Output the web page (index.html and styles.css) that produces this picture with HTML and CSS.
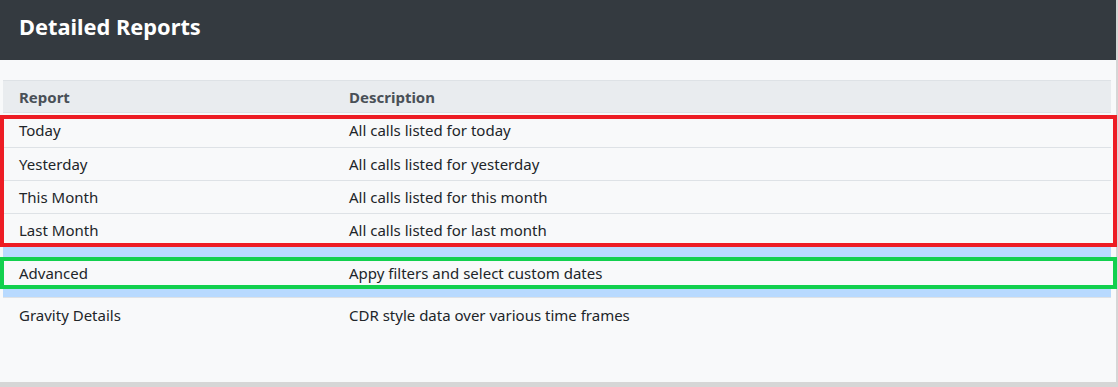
FILE: index.html
```html
<!DOCTYPE html>
<html lang="en">
<head>
<meta charset="utf-8">
<title>Detailed Reports</title>
<link rel="stylesheet" href="styles.css">
</head>
<body>
<div class="panel">
  <header class="panel-head">
    <h1 class="title">Detailed Reports</h1>
  </header>
  <div class="panel-body">
    <div class="reports">
      <div class="row row-head">
        <div class="cell c1">Report</div>
        <div class="cell c2">Description</div>
      </div>
      <div class="row"><div class="cell c1">Today</div><div class="cell c2">All calls listed for today</div></div>
      <div class="row"><div class="cell c1">Yesterday</div><div class="cell c2">All calls listed for yesterday</div></div>
      <div class="row"><div class="cell c1">This Month</div><div class="cell c2">All calls listed for this month</div></div>
      <div class="row"><div class="cell c1">Last Month</div><div class="cell c2">All calls listed for last month</div></div>
      <div class="group-primary">
        <div class="row row-inner"><div class="cell c1">Advanced</div><div class="cell c2">Appy filters and select custom dates</div></div>
      </div>
      <div class="row row-last"><div class="cell c1">Gravity Details</div><div class="cell c2">CDR style data over various time frames</div></div>
    </div>
  </div>
  <div class="mark mark-red"></div>
  <div class="mark mark-green"></div>
</div>
</body>
</html>
```

FILE: styles.css
```css
* { box-sizing: border-box; }
html, body { margin: 0; padding: 0; }
body {
  background: #d6d6d6;
  font-family: "Noto Sans", "Open Sans", sans-serif;
  color: #212529;
  width: 1118px;
  height: 387px;
  overflow: hidden;
}
.panel {
  position: relative;
  width: 1116px;
  height: 382px;
  background: #f8f9fa;
}
.panel-head {
  height: 60px;
  background: #343a40;
  display: flex;
  align-items: center;
  padding-left: 19px;
}
.title {
  margin: 0;
  color: #fff;
  font-size: 21.8px;
  font-weight: 700;
  line-height: 1;
  padding-bottom: 7px;
}
.panel-body {
  padding: 20px 5px 0 3px;
}
.reports {
  width: 1108px;
}
.row {
  display: flex;
  align-items: center;
  height: 33px;
  border-top: 1px solid #dee2e6;
  font-size: 15px;
}
.row-head {
  background: #e9ecef;
  font-weight: 700;
  color: #495057;
  height: 33px;
  border-bottom: 1px solid #dee2e6;
}
.row-head + .row { border-top: none; height: 34px; }
.cell { padding-left: 16px; }
.c1 { width: 330px; }
.c2 { flex: 1; }
.group-primary {
  background: #b8daff;
  padding: 10px 0 9px;
  margin-top: 1px;
}
.row-inner {
  border-top: none;
  background: #f8f9fa;
  height: 31px;
}
.row-last {
  height: 34px;
  border-top: 1px solid #dee2e6;
}
.mark {
  position: absolute;
  left: 0;
  width: 1117px;
  border-style: solid;
  border-width: 4px;
}
.mark-red {
  top: 115px;
  height: 132px;
  border-color: #ed1c24;
}
.mark-green {
  top: 257px;
  height: 32px;
  border-color: #12d04e;
}
```
